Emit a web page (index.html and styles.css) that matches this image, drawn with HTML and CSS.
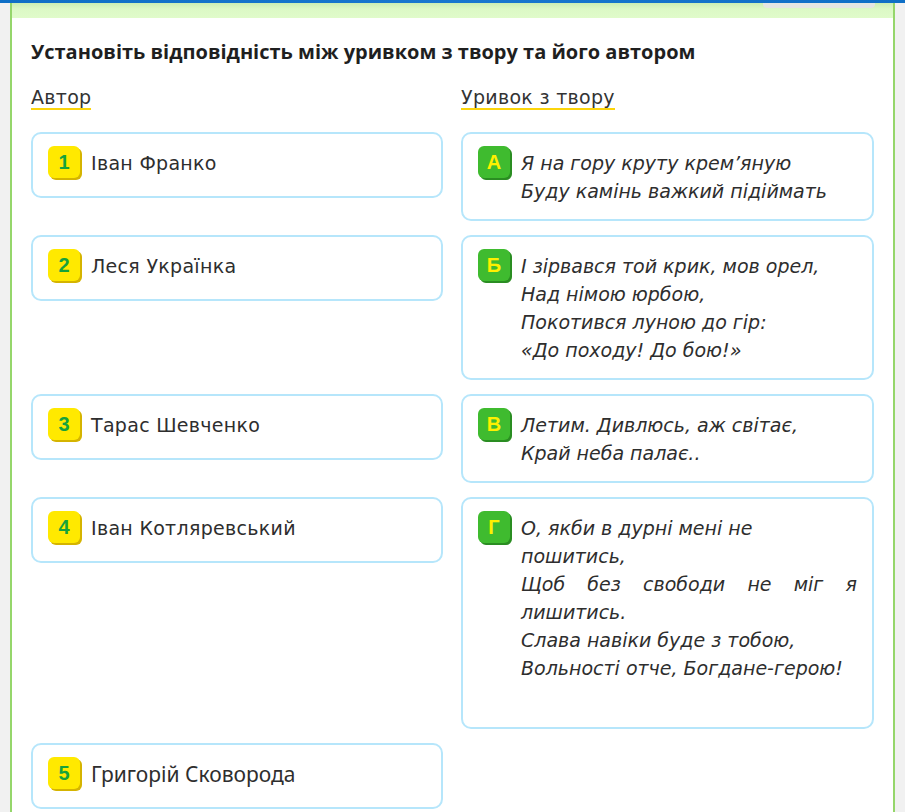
FILE: index.html
```html
<!DOCTYPE html>
<html lang="uk">
<head>
  <meta charset="UTF-8" />
  <title>Установіть відповідність</title>
  <meta name="viewport" content="width=device-width, initial-scale=1.0"/>
  <link rel="stylesheet" href="styles.css">
</head>
<body>

<div class="topbar"></div>

<div class="page">
  <div class="sheet">
    <div class="band"><span class="band-pill"></span></div>

    <div class="task">
      <h2 class="task-title">Установіть відповідність між уривком з твору та його автором</h2>

      <div class="match-grid">
        <div class="col-head"><span>Автор</span></div>
        <div class="col-head"><span>Уривок з твору</span></div>

        <div class="card">
          <span class="badge badge-num">1</span>
          <div class="card-text">Іван Франко</div>
        </div>
        <div class="card">
          <span class="badge badge-letter">А</span>
          <div class="card-text quote">Я на гору круту крем’яную<br>Буду камінь важкий підіймать</div>
        </div>

        <div class="card">
          <span class="badge badge-num">2</span>
          <div class="card-text">Леся Українка</div>
        </div>
        <div class="card">
          <span class="badge badge-letter">Б</span>
          <div class="card-text quote">І зірвався той крик, мов орел,<br>Над німою юрбою,<br>Покотився луною до гір:<br>«До походу! До бою!»</div>
        </div>

        <div class="card">
          <span class="badge badge-num">3</span>
          <div class="card-text">Тарас Шевченко</div>
        </div>
        <div class="card">
          <span class="badge badge-letter">В</span>
          <div class="card-text quote">Летим. Дивлюсь, аж світає,<br>Край неба палає..</div>
        </div>

        <div class="card">
          <span class="badge badge-num">4</span>
          <div class="card-text">Іван Котляревський</div>
        </div>
        <div class="card">
          <span class="badge badge-letter">Г</span>
          <div class="card-text quote">
            <p>О, якби в дурні мені не пошитись,</p>
            <p class="justify">Щоб без свободи не міг я лишитись.</p>
            <p>Слава навіки буде з тобою,<br>Вольності отче, Богдане-герою!</p>
            <p class="blank"></p>
          </div>
        </div>

        <div class="card">
          <span class="badge badge-num">5</span>
          <div class="card-text alt-font">Григорій Сковорода</div>
        </div>
      </div>
    </div>
  </div>
</div>

</body>
</html>
```

FILE: styles.css
```css
body {
  margin: 0;
  background-color: #f1f1f1;
  font-family: "DejaVu Sans", Arial, sans-serif;
  color: #2e2e2e;
}
.topbar {
  height: 3px;
  background: linear-gradient(to right, #0f6fc6, #1877cf, #0f6fc6);
}
.page {
  padding: 0 10px;
}
.sheet {
  background: #fff;
  border-left: 2px solid #95d66b;
  border-right: 2px solid #95d66b;
  min-height: 809px;
}
.band {
  height: 15px;
  background: linear-gradient(to bottom, #cbeeb4, #dcf9c6 40%, #e0fbca);
  position: relative;
}
.band-pill {
  position: absolute;
  top: 0;
  right: 18px;
  width: 112px;
  height: 5px;
  background: #e4e6e3;
  border-radius: 0 0 4px 4px;
}
.task {
  padding: 0 19px;
}
.task-title {
  margin: 21px 0 21px;
  font-family: "Open Sans", Arial, sans-serif;
  font-size: 20px;
  line-height: 26px;
  font-weight: 700;
  color: #1f1f1f;
}
.match-grid {
  display: grid;
  grid-template-columns: 412px 413px;
  column-gap: 18px;
  row-gap: 14px;
  align-items: start;
}
.col-head {
  margin-bottom: 8px;
  font-size: 19px;
  line-height: 22px;
  letter-spacing: 0.3px;
  color: #333;
}
.col-head span {
  display: inline-block;
  border-bottom: 2px solid #fbd40b;
}
.card {
  display: flex;
  align-items: flex-start;
  gap: 11px;
  min-height: 66px;
  box-sizing: border-box;
  border: 2px solid #b6e6fb;
  border-radius: 10px;
  padding: 12px 15px 14px 15px;
}
.badge {
  flex: none;
  width: 32px;
  height: 32px;
  border-radius: 6px;
  text-align: center;
  font-family: "Liberation Sans", Arial, sans-serif;
  font-weight: 900;
  font-size: 20px;
  line-height: 32px;
}
.badge-num {
  background: #ffe900;
  color: #16a23c;
  box-shadow: 2px 2px 0 #d5b400;
}
.badge-letter {
  background: #3fbb2f;
  color: #fff000;
  box-shadow: 2px 2px 0 #2a8d22;
}
.card-text {
  margin-top: 3px;
  font-size: 19px;
  line-height: 28px;
  letter-spacing: 0.3px;
  flex: 1;
}
.quote {
  font-style: italic;
  letter-spacing: 0;
}
.card-text p {
  margin: 0;
}
.card-text .justify {
  text-align: justify;
  text-align-last: left;
}
.card-text .blank {
  height: 31px;
}
.alt-font {
  font-family: "Noto Sans", sans-serif;
  font-size: 21px;
  letter-spacing: 0;
}
```
